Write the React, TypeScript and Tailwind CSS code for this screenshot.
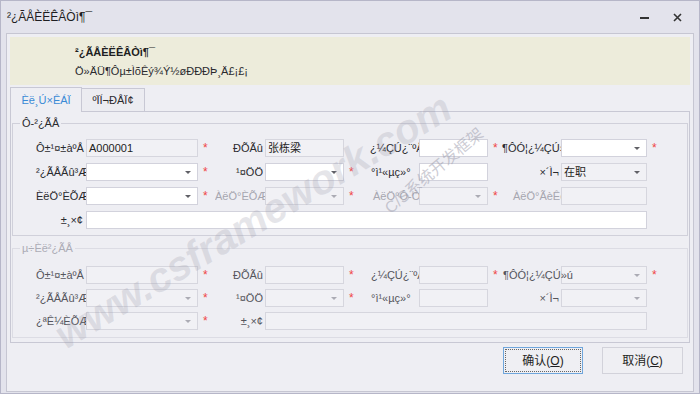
import React from "react";

type Dim = "n" | "mid" | "light";

function Lbl({ children, w, pad, dim = "n", vis }: { children?: React.ReactNode; w: string; pad: string; dim?: Dim; vis?: boolean }) {
  const color = dim === "light" ? "text-[#a6a6b0]" : dim === "mid" ? "text-[#55555c]" : "text-[#2a2a2e]";
  return (
    <div className={`${w} ${pad} ${color} h-[18px] leading-[18px] whitespace-nowrap shrink-0 ${vis ? "relative z-10 overflow-visible" : "overflow-hidden"}`}>
      {children}
    </div>
  );
}

type Kind = "white" | "ro" | "dis";

function Box({ w, kind, v, combo }: { w: string; kind: Kind; v?: string; combo?: boolean }) {
  const cls = kind === "white" ? "bg-white border-[#d2d2dc]" : "bg-[#f1f1f5] border-[#d6d6de]";
  return (
    <div className={`${w} ${cls} h-[18px] shrink-0 border flex items-center`}>
      <span className="flex-1 pl-[2px] leading-[16px] text-[#1e1e22] whitespace-nowrap overflow-hidden">{v}</span>
      {combo && (
        <svg width="6" height="3" viewBox="0 0 6 3" className="mr-[6px] shrink-0">
          <path d="M0 0H6L3 3Z" fill={kind === "dis" ? "#ababb4" : "#606066"} />
        </svg>
      )}
    </div>
  );
}

function Star({ w, show }: { w: string; show?: boolean }) {
  return <div className={`${w} shrink-0 pl-[5px] h-[18px] leading-[18px] text-[12px] text-[#f04545]`}>{show ? "*" : ""}</div>;
}

function Row({ children }: { children: React.ReactNode }) {
  return <div className="flex items-center h-[18px]">{children}</div>;
}

export default function App() {
  return (
    <div className="relative w-[700px] h-[394px] overflow-hidden bg-[#e3e3ec] border border-[#b6b6c8] font-['Liberation_Sans','Noto_Sans_CJK_SC',sans-serif] text-[11px] text-[#2a2a2e]">
      {/* title bar */}
      <div className="h-[32px] flex items-center pl-[6px] pr-[14px]">
        <div className="flex-1 text-[12px] text-[#1e1e22]">²¿ÃÅÈËÊÂÒì¶¯</div>
        <div className="w-[9px] h-[2px] bg-[#333] mr-[24px] mt-[2px]" />
        <svg width="9" height="9" viewBox="0 0 9 9" className="mr-[3px]">
          <path d="M1 1L8 8M8 1L1 8" stroke="#333" strokeWidth="1.6" />
        </svg>
      </div>

      {/* panel */}
      <div className="ml-[5px] w-[688px] h-[359px] border border-[#c6c6d2] bg-[#eeeef3] flex flex-col">
        {/* header */}
        <div className="mt-[3px] mx-[3px] h-[48px] bg-[#edecdb] pl-[65px] pt-[8px]">
          <div className="leading-[14px] font-bold text-[#1e1e22]">²¿ÃÅÈËÊÂÒì¶¯</div>
          <div className="leading-[14px] mt-[5px] text-[#2a2a2e]">Ö»ÄÜ¶Ôµ±ÌõÊý¾Ý½øÐÐÐÞ¸Ä£¡£¡</div>
        </div>

        {/* tabs */}
        <div className="mt-[2px] mx-[3px] h-[25px] flex items-end">
          <div className="w-[72px] h-[25px] border-t border-l border-r border-[#c8c8d4] bg-[#eeeef3] flex items-center justify-center text-[#3a8ad6]">
            Èë¸Ú×ÊÁÏ
          </div>
          <div className="w-[63px] h-[24px] border-t border-r border-b border-[#c8c8d4] bg-[#ececf1] flex items-center justify-center text-[#2a2a2e]">
            ºÏÍ¬ÐÅÏ¢
          </div>
          <div className="flex-1 h-full border-b border-[#c8c8d4]" />
        </div>

        {/* tab page */}
        <div className="mx-[3px] h-[231px] border-l border-r border-b border-[#c8c8d4] flex flex-col">
          <fieldset className="mt-[4px] mx-[1px] border border-[#d0d0da] pt-[9px] pb-[6px] flex flex-col gap-[6px]">
            <legend className="ml-[7px] px-[2px] leading-[14px] text-[#2a2a2e]">Ô-²¿ÃÅ</legend>
            <Row>
              <Lbl w="w-[73px]" pad="pl-[23px]">Ô±¹¤±àºÅ</Lbl>
              <Box w="w-[112px]" kind="ro" v="A000001" />
              <Star w="w-[17px]" show />
              <Lbl w="w-[50px]" pad="text-right pr-[2px]">ÐÕÃû</Lbl>
              <Box w="w-[79px]" kind="ro" v="张栋梁" />
              <Star w="w-[16px]" />
              <Lbl w="w-[59px]" pad="pl-[10px]">¿¼ÇÚ¿¨ºÅ</Lbl>
              <Box w="w-[69px]" kind="white" />
              <Star w="w-[12px]" show />
              <Lbl w="w-[61px]" pad="pl-[2px]">¶ÔÓ¦¿¼ÇÚ»ú</Lbl>
              <Box w="w-[86px]" kind="white" combo />
              <Star w="w-[15px]" show />
            </Row>
            <Row>
              <Lbl w="w-[73px]" pad="pl-[23px]">²¿ÃÅÃû³Æ</Lbl>
              <Box w="w-[112px]" kind="white" combo />
              <Star w="w-[17px]" show />
              <Lbl w="w-[50px]" pad="text-right pr-[2px]">¹¤ÖÖ</Lbl>
              <Box w="w-[79px]" kind="white" combo />
              <Star w="w-[16px]" show />
              <Lbl w="w-[59px]" pad="pl-[11px]">°ì¹«µç»°</Lbl>
              <Box w="w-[69px]" kind="white" />
              <Star w="w-[12px]" />
              <Lbl w="w-[61px]" pad="text-right pr-[2px]">×´Ì¬</Lbl>
              <Box w="w-[86px]" kind="ro" v="在职" combo />
              <Star w="w-[15px]" />
            </Row>
            <Row>
              <Lbl w="w-[73px]" pad="pl-[23px]">ÈëÖ°ÈÕÆÚ</Lbl>
              <Box w="w-[112px]" kind="white" combo />
              <Star w="w-[17px]" show />
              <Lbl w="w-[50px]" pad="pl-[0px]" dim="light">ÀëÖ°ÈÕÆÚ</Lbl>
              <Box w="w-[79px]" kind="dis" combo />
              <Star w="w-[16px]" show />
              <Lbl w="w-[59px]" pad="pl-[13px]" dim="light">ÀëÖ°Ô-Òò</Lbl>
              <Box w="w-[69px]" kind="dis" combo />
              <Star w="w-[12px]" show />
              <Lbl w="w-[61px]" pad="pl-[13px]" dim="light">ÀëÖ°ÃèÊö</Lbl>
              <Box w="w-[86px]" kind="dis" />
              <Star w="w-[15px]" />
            </Row>
            <Row>
              <Lbl w="w-[73px]" pad="text-right pr-[3px]">±¸×¢</Lbl>
              <Box w="w-[561px]" kind="white" />
            </Row>
          </fieldset>

          <fieldset className="mt-[5px] mx-[1px] border border-[#dcdce4] pt-[11px] pb-[7px] flex flex-col gap-[5px]">
            <legend className="ml-[7px] px-[2px] leading-[14px] text-[#acacb6]">µ÷Èë²¿ÃÅ</legend>
            <Row>
              <Lbl w="w-[73px]" pad="pl-[23px]" dim="mid">Ô±¹¤±àºÅ</Lbl>
              <Box w="w-[112px]" kind="dis" />
              <Star w="w-[17px]" show />
              <Lbl w="w-[50px]" pad="text-right pr-[2px]" dim="mid">ÐÕÃû</Lbl>
              <Box w="w-[79px]" kind="dis" />
              <Star w="w-[16px]" show />
              <Lbl w="w-[59px]" pad="pl-[11px]" dim="mid">¿¼ÇÚ¿¨ºÅ</Lbl>
              <Box w="w-[69px]" kind="dis" />
              <Star w="w-[12px]" show />
              <Lbl w="w-[61px]" pad="pl-[3px]" dim="mid" vis>¶ÔÓ¦¿¼ÇÚ»ú</Lbl>
              <Box w="w-[86px]" kind="dis" combo />
              <Star w="w-[15px]" show />
            </Row>
            <Row>
              <Lbl w="w-[73px]" pad="pl-[23px]" dim="mid">²¿ÃÅÃû³Æ</Lbl>
              <Box w="w-[112px]" kind="dis" combo />
              <Star w="w-[17px]" show />
              <Lbl w="w-[50px]" pad="text-right pr-[2px]" dim="mid">¹¤ÖÖ</Lbl>
              <Box w="w-[79px]" kind="dis" combo />
              <Star w="w-[16px]" show />
              <Lbl w="w-[59px]" pad="pl-[11px]" dim="mid">°ì¹«µç»°</Lbl>
              <Box w="w-[69px]" kind="dis" />
              <Star w="w-[12px]" />
              <Lbl w="w-[61px]" pad="text-right pr-[2px]" dim="mid">×´Ì¬</Lbl>
              <Box w="w-[86px]" kind="dis" combo />
              <Star w="w-[15px]" />
            </Row>
            <Row>
              <Lbl w="w-[73px]" pad="pl-[23px]" dim="mid">¿ªÊ¼ÈÕÆÚ</Lbl>
              <Box w="w-[112px]" kind="dis" combo />
              <Star w="w-[17px]" show />
              <Lbl w="w-[50px]" pad="text-right pr-[2px]" dim="mid">±¸×¢</Lbl>
              <Box w="w-[382px]" kind="dis" />
            </Row>
          </fieldset>
        </div>

        {/* buttons */}
        <div className="mt-[4px] flex justify-end gap-[19px] pr-[10px]">
          <button className="w-[80px] h-[27px] border border-[#6fa6dc] bg-[#efeff3] outline-dotted outline-1 outline-[#666] outline-offset-[-3px] text-[#1e1e22] text-[12px]">
            确认(<span className="underline">O</span>)
          </button>
          <button className="w-[81px] h-[27px] border border-[#d2d2da] bg-[#efeff3] text-[#1e1e22] text-[12px]">
            取消(<span className="underline">C</span>)
          </button>
        </div>
      </div>

      {/* watermark */}
      <div className="absolute left-[2px] top-[196px] w-[500px] text-center -rotate-[31deg] text-[41px] leading-[48px] font-bold italic text-[#9a9aaa]/25 pointer-events-none whitespace-nowrap">
        www.csframework.com
      </div>
      <div className="absolute left-[372px] top-[160px] -rotate-[40deg] text-[16px] leading-[20px] text-[#9a9aaa]/50 pointer-events-none whitespace-nowrap">
        C/S系统开发框架
      </div>
    </div>
  );
}
